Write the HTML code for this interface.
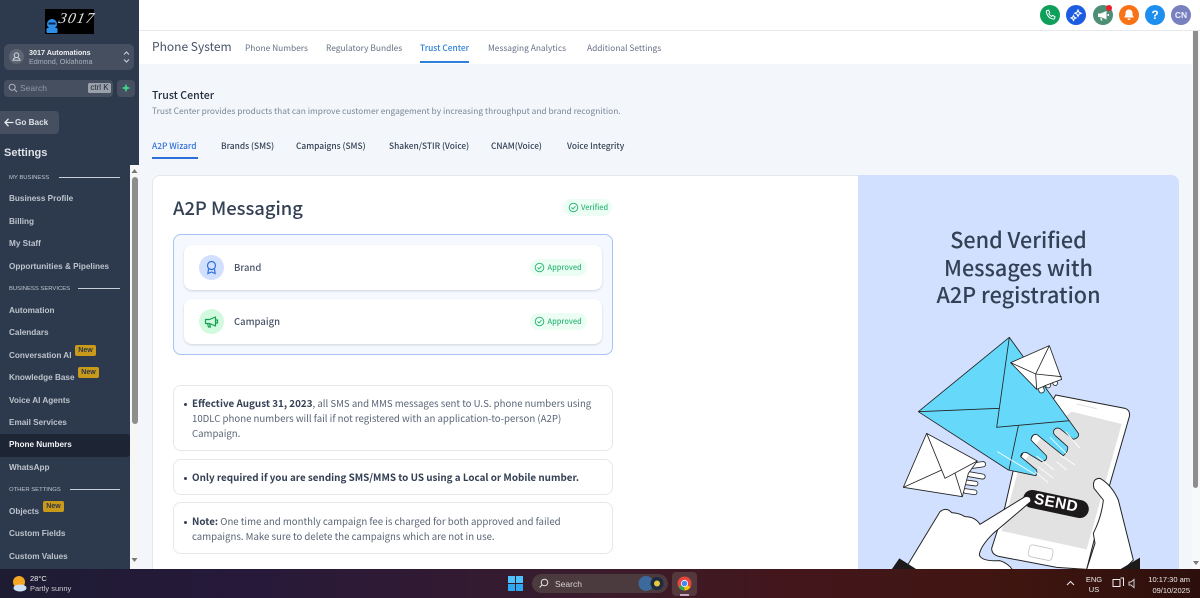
<!DOCTYPE html>
<html lang="en"><head><meta charset="utf-8"><title>Trust Center</title>
<style>
html,body{margin:0;padding:0}
body{width:1200px;height:598px;overflow:hidden;position:relative;background:#f3f7fb;font-family:"Liberation Sans","Noto Sans CJK SC",sans-serif}
.a{position:absolute;white-space:nowrap;line-height:1}
.n{font-family:"Noto Sans CJK SC","Liberation Sans",sans-serif}
.box{position:absolute;box-sizing:border-box}
.si{position:absolute;left:9px;font-size:8.2px;font-weight:700;color:#bdc3cc;line-height:12px;white-space:nowrap;margin-top:1px}
.sec{position:absolute;left:9px;font-size:5.9px;color:#c0c6cf;line-height:8px;white-space:nowrap;margin-top:1px}
.ln{position:absolute;height:1px;background:#c8ced8}
.new{position:absolute;background:#c99a1a;color:#2c3648;font-size:7px;font-weight:700;border-radius:2px;height:11px;line-height:11px;width:21px;text-align:center}
.tab{position:absolute;top:42px;font-size:8.4px;color:#667085;line-height:12px;white-space:nowrap}
.st{position:absolute;top:139.5px;font-size:8.4px;font-weight:500;color:#344054;line-height:12px;white-space:nowrap}
.pill{position:absolute;box-sizing:border-box;background:#ecfdf3;border-radius:9px;color:#32b87a;font-size:7.4px;font-weight:500}
.pill span{position:absolute;top:3.5px;line-height:10px;white-space:nowrap}
.pill svg{position:absolute}
.row{position:absolute;left:184px;width:418px;height:45px;background:#fff;border-radius:8px;box-shadow:0 1px 2px rgba(16,24,40,.16)}
.note{position:absolute;left:173px;width:440px;box-sizing:border-box;background:#fff;border:1px solid #e4e7ec;border-radius:8px}
.t{position:absolute;left:192px;font-size:9.65px;color:#5a6576;line-height:15px;white-space:nowrap;margin-top:1px}
.t b{color:#344054;font-weight:700;font-size:9.85px}
.dot{position:absolute;left:183.5px;width:3.4px;height:3.4px;border-radius:50%;background:#344054}
.c{position:absolute;top:5px;width:20px;height:20px;border-radius:50%}
.c svg{position:absolute;left:0;top:0}
</style></head><body>

<!-- top bar -->
<div class="box" style="left:139px;top:0;width:1061px;height:31px;background:#fff;border-bottom:1px solid #e6e8ec"></div>
<div class="c" style="left:1040px;background:#0e9f5b"><svg width="20" height="20" viewBox="0 0 20 20"><path d="M7 5.500l1.600-.4 1.200 2.600-1 1c.6 1.200 1.500 2.100 2.700 2.700l1-1 2.500 1.200-.3 1.600c-.2.7-1 1-1.800.8C9.600 13.300 7.300 11 6.500 7.600c-.2-.8 0-1.700.5-2.100z" fill="none" stroke="#fff" stroke-width="1"/></svg></div>
<div class="c" style="left:1066px;background:#1d5ce0"><svg width="20" height="20" viewBox="0 0 20 20"><path d="M12 5l1 2.200 2.200 1-2.200 1-1 2.200-1-2.200-2.200-1 2.200-1zM7.500 10.500l.8 1.700 1.700.8-1.700.8-.8 1.700-.8-1.700-1.700-.8 1.700-.8z" fill="none" stroke="#fff" stroke-width="1.100"/></svg></div>
<div class="c" style="left:1093px;background:#4d8f74"><svg width="20" height="20" viewBox="0 0 20 20"><path d="M5 8.500h2.500L13.500 6v8.500L7.500 12H5zM7 12.500l1 3h1.500l-1-2.500M14.500 9h1.500v2h-1.500z" fill="#fff"/></svg></div>
<div class="box" style="left:1106px;top:5px;width:6px;height:6px;border-radius:50%;background:#ef1c2c"></div>
<div class="c" style="left:1119px;background:#f97316"><svg width="20" height="20" viewBox="0 0 20 20"><path d="M10 4.500c-2.500 0-3.500 2-3.500 4 0 2-.7 3-1.500 4h10c-.8-1-1.500-2-1.500-4 0-2-1-4-3.500-4zM8.500 13.500a1.500 1.500 0 0 0 3 0z" fill="#fff"/></svg></div>
<div class="c" style="left:1145px;background:#1e8fee;color:#fff;font-size:12px;font-weight:700;text-align:center;line-height:20px">?</div>
<div class="c" style="left:1171px;background:#7880be;color:#eef;font-size:8.5px;font-weight:700;text-align:center;line-height:20px">CN</div>

<!-- sub header -->
<div class="box" style="left:139px;top:31px;width:1054px;height:33px;background:#fff"></div>
<div class="a n" style="left:152px;top:38.500px;font-size:12px;line-height:15px;color:#475467">Phone System</div>
<div class="tab n" style="left:245px">Phone Numbers</div>
<div class="tab n" style="left:326px">Regulatory Bundles</div>
<div class="tab n" style="left:420px;color:#2f80d8;font-weight:500">Trust Center</div>
<div class="tab n" style="left:488px">Messaging Analytics</div>
<div class="tab n" style="left:587px">Additional Settings</div>
<div class="box" style="left:420px;top:61px;width:49px;height:2px;background:#2f80d8"></div>

<!-- title -->
<div class="a n" style="left:152px;top:89px;font-size:10.600px;line-height:14px;font-weight:500;color:#1f2a3a">Trust Center</div>
<div class="a n" style="left:152px;top:105px;font-size:8.400px;line-height:12px;color:#7a8696">Trust Center provides products that can improve customer engagement by increasing throughput and brand recognition.</div>

<div class="st n" style="left:152px;color:#2f6fdc">A2P Wizard</div>
<div class="st n" style="left:221px">Brands (SMS)</div>
<div class="st n" style="left:296px">Campaigns (SMS)</div>
<div class="st n" style="left:389px">Shaken/STIR (Voice)</div>
<div class="st n" style="left:491px">CNAM(Voice)</div>
<div class="st n" style="left:567px">Voice Integrity</div>
<div class="box" style="left:152px;top:157px;width:46px;height:2px;background:#2f6fdc"></div>

<!-- card -->
<div class="box" style="left:152px;top:174.500px;width:1027px;height:420px;background:#fff;border:1px solid #e4e7ec;border-radius:8px"></div>
<div class="box" style="left:858px;top:175px;width:321px;height:420px;background:#d1e0ff;border-radius:0 8px 0 0"></div>

<div class="a n" style="left:173px;top:195.500px;font-size:18.400px;line-height:24px;font-weight:500;color:#344054">A2P Messaging</div>
<div class="pill" style="left:563px;top:199px;width:49px;height:17px"><svg style="left:5px;top:3px" width="11" height="11" viewBox="0 0 11 11"><circle cx="5.500" cy="5.500" r="4.300" fill="none" stroke="#32b87a"/><path d="M3.500 5.500l1.500 1.500 2.500-2.800" fill="none" stroke="#32b87a"/></svg><span class="n" style="left:18px">Verified</span></div>

<div class="box" style="left:173px;top:234px;width:440px;height:121px;background:#f5f8ff;border:1px solid #a9c3f5;border-radius:8px"></div>
<div class="row" style="top:245px"></div>
<div class="row" style="top:299px"></div>

<div class="box" style="left:199px;top:255px;width:25px;height:25px;border-radius:50%;background:#d1e0ff"></div>
<svg class="box" style="left:199px;top:255px" width="25" height="25" viewBox="0 0 25 25"><circle cx="12.500" cy="10.500" r="4" fill="none" stroke="#2f6fdc" stroke-width="1.200"/><path d="M9.500 14l-.6 4.500 3.600-1.500 3.600 1.500-.6-4.500" fill="none" stroke="#2f6fdc" stroke-width="1.200"/></svg>
<div class="a n" style="left:234px;top:261px;font-size:9.500px;line-height:13px;font-weight:500;color:#475467">Brand</div>
<div class="pill" style="left:530px;top:259px;width:57px;height:17px"><svg style="left:4px;top:3px" width="11" height="11" viewBox="0 0 11 11"><circle cx="5.500" cy="5.500" r="4.300" fill="none" stroke="#32b87a"/><path d="M3.500 5.500l1.500 1.500 2.500-2.800" fill="none" stroke="#32b87a"/></svg><span class="n" style="left:17.500px">Approved</span></div>

<div class="box" style="left:199px;top:309px;width:25px;height:25px;border-radius:50%;background:#d1fadf"></div>
<svg class="box" style="left:199px;top:309px" width="25" height="25" viewBox="0 0 25 25"><path d="M6.500 10.500h4l6-2.500v9l-6-2.500h-4zM8.500 14.500l1 3.500h2l-1-3.500M17 11h1.500v3H17" fill="none" stroke="#12a150" stroke-width="1.200" stroke-linejoin="round"/></svg>
<div class="a n" style="left:234px;top:315px;font-size:9.500px;line-height:13px;font-weight:500;color:#475467">Campaign</div>
<div class="pill" style="left:530px;top:313px;width:57px;height:17px"><svg style="left:4px;top:3px" width="11" height="11" viewBox="0 0 11 11"><circle cx="5.500" cy="5.500" r="4.300" fill="none" stroke="#32b87a"/><path d="M3.500 5.500l1.500 1.500 2.500-2.800" fill="none" stroke="#32b87a"/></svg><span class="n" style="left:17.500px">Approved</span></div>

<div class="note" style="top:385px;height:66px"></div>
<div class="note" style="top:459px;height:36px"></div>
<div class="note" style="top:502px;height:52px"></div>
<div class="dot" style="top:402.500px"></div>
<div class="dot" style="top:476.500px"></div>
<div class="dot" style="top:520.500px"></div>
<div class="t n" style="top:395px"><b>Effective August 31, 2023</b>, all SMS and MMS messages sent to U.S. phone numbers using</div>
<div class="t n" style="top:410px">10DLC phone numbers will fail if not registered with an application-to-person (A2P)</div>
<div class="t n" style="top:425px">Campaign.</div>
<div class="t n" style="top:469px"><b>Only required if you are sending SMS/MMS to US using a Local or Mobile number.</b></div>
<div class="t n" style="top:513px"><b>Note:</b> One time and monthly campaign fee is charged for both approved and failed</div>
<div class="t n" style="top:528px">campaigns. Make sure to delete the campaigns which are not in use.</div>

<!-- right panel text -->
<div class="a n" style="left:858px;width:321px;text-align:center;top:226px;font-size:21.600px;line-height:27.500px;font-weight:500;color:#344054">Send Verified<br>Messages with<br>A2P registration</div>

<!-- illustration -->
<svg class="box" style="left:890px;top:330px" width="250" height="240" viewBox="0 0 750 720">
<path d="M497 195L705 235Q722 241 718 260L620 600 590 718 500 712 330 680Q305 675 305 655L345 530 370 420z" fill="#fff" stroke="#222" stroke-width="3"/>
<path d="M545 245L695 282 590 658 335 603 385 420 470 300z" fill="#e2e2e2"/>
<path d="M560 222L620 236" stroke="#ddd" stroke-width="2.500" fill="none"/>
<rect x="416" y="650" width="72" height="36" rx="9" transform="rotate(12 452 668)" fill="none" stroke="#c4c4c4" stroke-width="2.500"/>
<path d="M85 245L358 22 565 310Q570 322 550 328L510 296Q495 290 490 305 490 312 497 318L533 350Q535 365 520 377L440 313Q425 312 423 330L470 378Q472 392 455 395L410 368Q393 365 392 380L440 420Q442 435 437 437L355 420z" fill="#66d9fb" stroke="#222" stroke-width="2.500" stroke-linejoin="round"/>
<path d="M85 245L328 235M358 22L320 292 538 272M385 288L357 420" fill="none" stroke="#222" stroke-width="2.500"/>
<g stroke="#fff" stroke-width="2.500" fill="none"><path d="M322 365L435 433M480 322L530 372M527 305L570 355M440 378L492 420M500 395L530 420M435 425L475 458M445 410L490 445M510 375L555 405"/></g>
<g fill="#fff" stroke="#222" stroke-width="2.500"><rect x="445" y="165" width="16" height="24" rx="7" transform="rotate(-25 453 177)"/><rect x="465" y="150" width="15" height="24" rx="7" transform="rotate(-25 472 162)"/><rect x="487" y="145" width="14" height="22" rx="7" transform="rotate(-25 494 156)"/></g>
<path d="M362 98L478 47 515 148 470 165 440 178z" fill="#fff" stroke="#222" stroke-width="2.500" stroke-linejoin="round"/>
<path d="M362 98L437 132 478 47M437 132L515 140M437 132L440 178" fill="none" stroke="#222" stroke-width="2.500"/>
<g fill="#fff" stroke="#222" stroke-width="2.500"><rect x="240" y="397" width="47" height="16" rx="8" transform="rotate(-8 263 405)"/><rect x="222" y="428" width="64" height="15" rx="7.500" transform="rotate(10 254 435)"/><rect x="222" y="452" width="42" height="14" rx="7" transform="rotate(8 243 459)"/><rect x="220" y="478" width="41" height="14" rx="7" transform="rotate(8 240 485)"/></g>
<path d="M110 310L262 393 235 430 217 500 40 472z" fill="#fff" stroke="#222" stroke-width="2.500" stroke-linejoin="round"/>
<path d="M110 310L165 445 262 393M40 472L155 420M195 430L217 500" fill="none" stroke="#222" stroke-width="2.500"/>
<rect x="398" y="495" width="200" height="54" rx="27" transform="rotate(12 498 522)" fill="#1c1a1a"/>
<text x="430" y="520" transform="rotate(11 430 520)" font-family="Liberation Sans,sans-serif" font-size="46" font-weight="700" fill="#fff" letter-spacing="1.500">SEND</text>
<path d="M45 718L150 545Q170 530 185 548 210 550 225 560 255 560 270 583L405 500Q425 497 422 515L310 610Q270 650 268 675 275 695 330 692 355 700 368 720z" fill="#fff" stroke="#222" stroke-width="3"/>
<path d="M590 718L615 640 610 610Q635 560 640 510L612 475Q605 445 630 445 665 465 685 510L730 690 700 720z" fill="#fff" stroke="#222" stroke-width="3"/>
<path d="M5 718L28 685 80 718zM690 718L755 680V718z" fill="#1c1a1a"/>
</svg>

<!-- main scrollbar -->
<div class="box" style="left:1192px;top:31px;width:8px;height:538px;background:#f8f9fa"></div>
<div class="box" style="left:1193px;top:31px;width:5px;height:457px;background:#8d8d8d;border-radius:0 0 3px 3px"></div>
<svg class="box" style="left:1192px;top:560px" width="8" height="6" viewBox="0 0 8 6"><path d="M1 1h6L4 5z" fill="#777"/></svg>

<!-- sidebar -->
<div class="box" style="left:0;top:0;width:139px;height:569px;background:#2d3a4d"></div>
<div class="box" style="left:130px;top:165px;width:9px;height:404px;background:#f6f6f6"></div>
<div class="box" style="left:132px;top:177px;width:6px;height:247px;background:#8d8d8d;border-radius:3px"></div>
<svg class="box" style="left:130px;top:168px" width="9" height="6" viewBox="0 0 9 6"><path d="M1.500 5h6L4.500 1z" fill="#777"/></svg>
<svg class="box" style="left:130px;top:557px" width="9" height="6" viewBox="0 0 9 6"><path d="M1.500 1h6L4.500 5z" fill="#777"/></svg>

<!-- logo -->
<div class="box" style="left:45px;top:9px;width:49px;height:25px;background:#000"></div>
<svg class="box" style="left:45px;top:9px" width="49" height="25" viewBox="0 0 49 25"><circle cx="7" cy="15" r="5" fill="#2f8fe8"/><rect x="1.500" y="19" width="11" height="5" rx="1" fill="#2f8fe8"/><rect x="3.500" y="13.500" width="7" height="2" fill="#0b2a55"/></svg>
<div class="a" style="left:59px;top:10px;font:italic 400 15px/18px 'Liberation Serif',serif;color:#e8e8e8;letter-spacing:1.500px;transform:skewX(-12deg)">3017</div>

<!-- location -->
<div class="box" style="left:4px;top:44px;width:130px;height:26px;background:#454f60;border-radius:5px"></div>
<div class="box" style="left:9px;top:49px;width:15px;height:15px;border-radius:50%;background:#5d6675"></div>
<svg class="box" style="left:9px;top:49px" width="15" height="15" viewBox="0 0 15 15"><circle cx="7.500" cy="6.200" r="2.300" fill="none" stroke="#d0d4da"/><path d="M4 11.200c.5-2 1.500-2.700 3.500-2.700s3 .7 3.500 2.700z" fill="none" stroke="#d0d4da"/></svg>
<div class="a" style="left:29px;top:48px;font-size:7.200px;line-height:10px;font-weight:700;color:#eef0f3">3017 Automations</div>
<div class="a" style="left:29px;top:57px;font-size:7.200px;line-height:10px;color:#a9b0bb">Edmond, Oklahoma</div>
<svg class="box" style="left:122px;top:50px" width="9" height="14" viewBox="0 0 9 14"><path d="M2 4.500l2.500-2.500 2.500 2.500M2 9.500l2.500 2.500 2.500-2.500" fill="none" stroke="#d0d4da"/></svg>

<!-- search -->
<div class="box" style="left:4px;top:80px;width:109px;height:17px;background:#454f60;border-radius:4px"></div>
<svg class="box" style="left:8px;top:83px" width="10" height="10" viewBox="0 0 10 10"><circle cx="4.200" cy="4.200" r="3" fill="none" stroke="#b0b6c0"/><path d="M6.500 6.500L9 9" stroke="#b0b6c0"/></svg>
<div class="a" style="left:20px;top:82.500px;font-size:8.500px;line-height:10px;color:#8f97a4">Search</div>
<div class="box" style="left:88px;top:83px;width:23px;height:10px;background:#9aa1ab;border-radius:1.500px;color:#1d2433;font-size:8px;line-height:10px;text-align:center;white-space:nowrap">ctrl K</div>
<div class="box" style="left:117px;top:80px;width:18px;height:17px;background:#454f60;border-radius:4px"></div>
<svg class="box" style="left:121px;top:83px" width="10" height="10" viewBox="0 0 10 10"><path d="M5 .5l1.200 3.300L9.500 5 6.200 6.200 5 9.500 3.800 6.200.5 5l3.300-1.200z" fill="#3ecf8e"/></svg>

<!-- go back -->
<div class="box" style="left:0;top:111px;width:59px;height:23px;background:#454f60;border-radius:0 4px 4px 0"></div>
<svg class="box" style="left:4px;top:118px" width="10" height="9" viewBox="0 0 10 9"><path d="M4.500 .8L1 4.500l3.500 3.700M1 4.500h8.500" fill="none" stroke="#e8eaee" stroke-width="1.300"/></svg>
<div class="a" style="left:15px;top:117px;font-size:8.200px;line-height:11px;font-weight:700;color:#dfe2e7">Go Back</div>
<div class="a" style="left:4px;top:145.500px;font-size:11px;line-height:15px;font-weight:700;color:#dfe2e7">Settings</div>

<div class="box" style="left:0;top:434px;width:130px;height:23px;background:#1d2433;border-radius:0 3px 3px 0"></div>

<div class="sec" style="top:173px">MY BUSINESS</div><div class="ln" style="left:59px;width:61px;top:177px"></div>
<div class="si" style="top:192px">Business Profile</div>
<div class="si" style="top:215px">Billing</div>
<div class="si" style="top:237px">My Staff</div>
<div class="si" style="top:260px">Opportunities &amp; Pipelines</div>
<div class="sec" style="top:284px">BUSINESS SERVICES</div><div class="ln" style="left:78px;width:42px;top:288px"></div>
<div class="si" style="top:304px">Automation</div>
<div class="si" style="top:326px">Calendars</div>
<div class="si" style="top:349px">Conversation AI</div><div class="new" style="left:75px;top:345px">New</div>
<div class="si" style="top:371px">Knowledge Base</div><div class="new" style="left:78px;top:367px">New</div>
<div class="si" style="top:394px">Voice AI Agents</div>
<div class="si" style="top:416px">Email Services</div>
<div class="si" style="top:438px;color:#f0f2f5">Phone Numbers</div>
<div class="si" style="top:461px">WhatsApp</div>
<div class="sec" style="top:485px">OTHER SETTINGS</div><div class="ln" style="left:70px;width:50px;top:489px"></div>
<div class="si" style="top:505px">Objects</div><div class="new" style="left:43px;top:501px">New</div>
<div class="si" style="top:527px">Custom Fields</div>
<div class="si" style="top:550px">Custom Values</div>

<!-- taskbar -->
<div class="box" style="left:0;top:569px;width:1200px;height:29px;background:linear-gradient(90deg,#1d1c33 0%,#26193a 20%,#3a1c2c 50%,#43161c 65%,#3f1510 85%,#2c0f0c 100%)"></div>
<svg class="box" style="left:10px;top:575px" width="18" height="18" viewBox="0 0 18 18"><circle cx="9" cy="7" r="6" fill="#f5a623"/><ellipse cx="10" cy="13" rx="6.500" ry="3.500" fill="#cfe0f2"/></svg>
<div class="a" style="left:30px;top:574px;font-size:7.500px;line-height:10px;color:#f0f0f0">28°C</div>
<div class="a" style="left:30px;top:584px;font-size:7.500px;line-height:10px;color:#d0ccd0">Partly sunny</div>
<svg class="box" style="left:508px;top:576px" width="15" height="15" viewBox="0 0 15 15"><rect width="7" height="7" fill="#4cc2ff"/><rect x="8" width="7" height="7" fill="#4cc2ff"/><rect y="8" width="7" height="7" fill="#2ea8f0"/><rect x="8" y="8" width="7" height="7" fill="#2ea8f0"/></svg>
<div class="box" style="left:532px;top:574px;width:136px;height:19px;background:#4b3a3e;border-radius:10px"></div>
<svg class="box" style="left:538px;top:578px" width="11" height="11" viewBox="0 0 11 11"><circle cx="6.500" cy="4.500" r="3.300" fill="none" stroke="#e8e8e8"/><path d="M4 7L1.500 9.500" stroke="#e8e8e8"/></svg>
<div class="a" style="left:555px;top:579px;font-size:8.500px;line-height:10px;color:#d8d4d4">Search</div>
<svg class="box" style="left:637px;top:575px" width="30" height="17" viewBox="0 0 30 17"><circle cx="9" cy="8.500" r="7.500" fill="#3c6a9c"/><circle cx="20" cy="8.500" r="6.500" fill="#1f2a40"/><circle cx="20" cy="8.500" r="3" fill="#e6c83c"/></svg>
<div class="box" style="left:672px;top:572px;width:25px;height:24px;background:#54383b;border-radius:4px"></div>
<svg class="box" style="left:677px;top:576px" width="15" height="15" viewBox="0 0 15 15"><circle cx="7.500" cy="7.500" r="7" fill="#e8453c"/><path d="M7.500 7.500L1.500 11a7 7 0 0 0 6 3.500z" fill="#34a853"/><path d="M7.500 7.500l6 3.500A7 7 0 0 1 7.500 14.500z" fill="#fbbc05"/><circle cx="7.500" cy="7.500" r="3.600" fill="#fff"/><circle cx="7.500" cy="7.500" r="2.800" fill="#4285f4"/></svg>
<div class="box" style="left:680px;top:594px;width:9px;height:1.500px;background:#c9a6c9"></div>
<svg class="box" style="left:1066px;top:580px" width="9" height="7" viewBox="0 0 9 7"><path d="M1 5l3.500-3.500L8 5" fill="none" stroke="#eee"/></svg>
<div class="a" style="left:1080px;top:575px;width:28px;text-align:center;font-size:7.500px;line-height:10px;color:#eee">ENG<br>US</div>
<svg class="box" style="left:1112px;top:577px" width="13" height="13" viewBox="0 0 13 13"><path d="M1 2.500h7v7H1zM8.500 1h3v8" fill="none" stroke="#eee"/></svg>
<svg class="box" style="left:1128px;top:578px" width="11" height="11" viewBox="0 0 11 11"><path d="M1 4h2l3-2.500v8L3 7H1z" fill="none" stroke="#ccc"/></svg>
<div class="a" style="left:1140px;top:574px;width:50px;text-align:right;font-size:7.500px;line-height:11px;color:#eee">10:17:30 am<br>09/10/2025</div>
</body></html>
